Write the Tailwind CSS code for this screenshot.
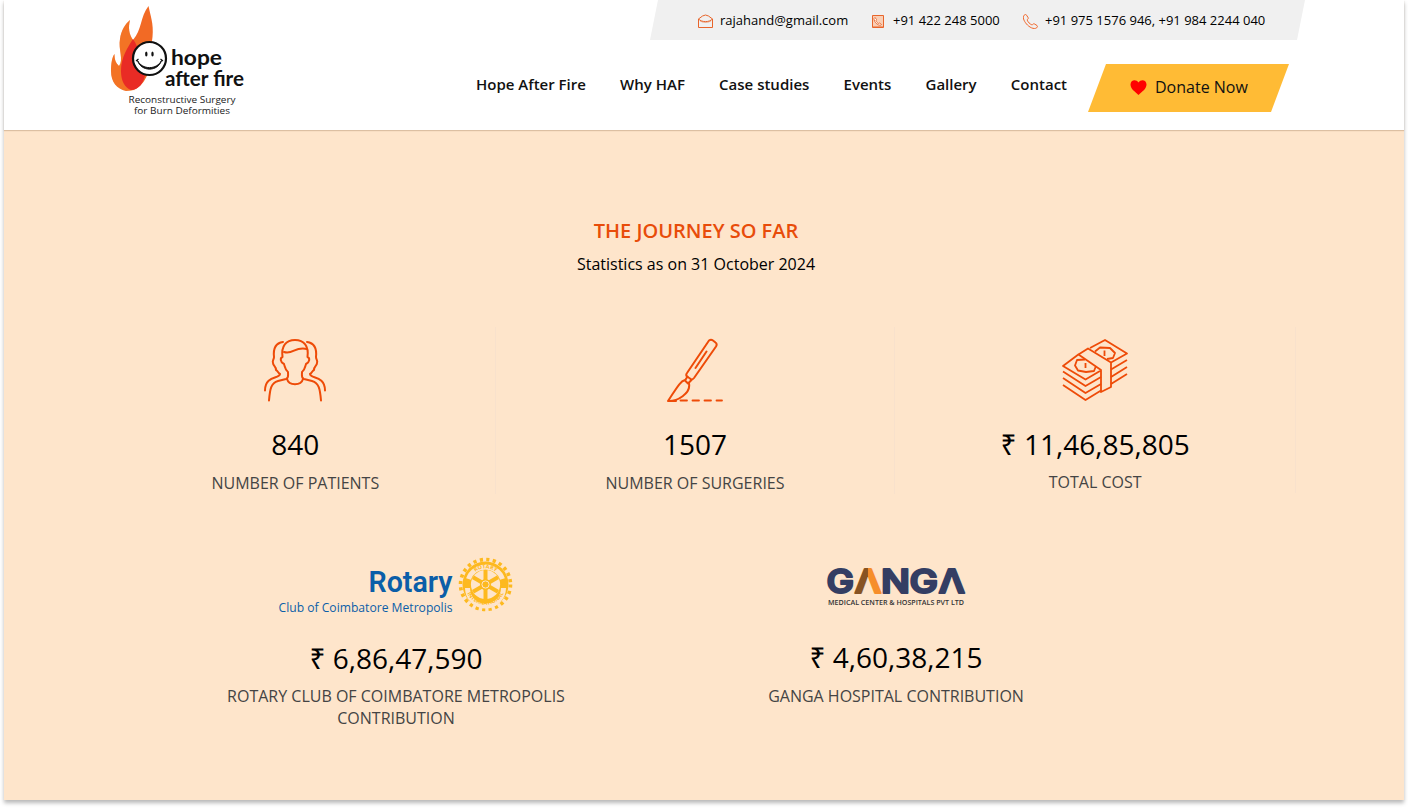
<!DOCTYPE html>
<html lang="en">
<head>
<meta charset="utf-8">
<title>Hope After Fire</title>
<script src="https://cdn.jsdelivr.net/npm/@tailwindcss/browser@4"></script>
</head>
<body class="bg-white h-[808px] overflow-hidden px-1 font-['Open_Sans','Noto_Sans',sans-serif] text-black">
<div class="w-[1400px] h-[800px] bg-[#fee5cb] shadow-[0_3px_4px_rgba(0,0,0,0.28)]">
  <header class="h-[130px] bg-white flex shadow-[0_1px_1px_rgba(120,80,40,0.25)]">
    <a class="block ml-24 w-[160px] shrink-0">
      <svg width="160" height="130" viewBox="100 0 160 130">
        <path d="M126 91C117 89 111 82 111 71C111 64 112 57 114.500 54C114.500 60 116 63 119 66C124 60 118 49 120 39C121 31 125 24 130 20C128 28 129 34 133 40C142 30 140 17 148.500 6C150 14 154 24 152.500 37C151 46 151 55 151 64C147 80 140 91 126 91Z" fill="#f26a25"/>
        <path d="M126 91C117 89 111 82 111 71C111 64 112 57 114.500 54C114.500 60 116 63 119 66C124 60 118 49 120 39C121 31 125 24 130 20C128 28 129 34 133 40C130 48 119 60 121 73C122 82 126 88 136 90Z" fill="#f58426" fill-opacity=".35"/>
        <path d="M133 39C128 47 121 57 121 71C121 81 125 88 131 90C139 90 144 82 145 75C140 63 140 48 133 39Z" fill="#e92b25"/>
        <circle cx="149.500" cy="58.500" r="16.500" fill="#fff" stroke="#111" stroke-width="2.200"/>
        <path d="M137.500 60.500C142 70 157 70 161.500 60.500C158 72 141 72 137.500 60.500Z" fill="#111" stroke="#111" stroke-width="1"/>
        <path d="M136 61l2.500-2M160.500 59l2.500 2" stroke="#111" stroke-width="1.200"/>
        <ellipse cx="146.300" cy="54" rx="1.200" ry="2.500" fill="#111"/><ellipse cx="152.500" cy="54" rx="1.200" ry="2.500" fill="#111"/>
        <g fill="#111" font-family="Lato" font-weight="700" font-size="21">
          <text x="171" y="64.500" textLength="51" lengthAdjust="spacingAndGlyphs">hope</text>
          <text x="165" y="86" textLength="79" lengthAdjust="spacingAndGlyphs">after fire</text>
        </g>
        <g fill="#222" font-family="Open Sans" font-size="9.500">
          <text x="128.500" y="103" textLength="107" lengthAdjust="spacingAndGlyphs">Reconstructive Surgery</text>
          <text x="134" y="114" textLength="96" lengthAdjust="spacingAndGlyphs">for Burn Deformities</text>
        </g>
      </svg>
    </a>
    <div class="ml-[216px] flex flex-col">
      <div class="ml-[174px] w-[655px] h-10 bg-[#f0f0f0] [clip-path:polygon(8px_0,100%_0,647px_100%,0_100%)] flex items-center pl-12 pt-0.5 text-[13px] whitespace-nowrap">
        <span class="flex items-center w-[174px]">
          <svg class="mr-[7px]" width="15" height="14" fill="none" stroke="#e8652b"><path d="M.5 5V13.500H14.500V5L10.500 2L7.500 1L4.500 2L.5 5C4 8.500 11 8.500 14.500 5"/><path d="M2 7C5 8.800 10 8.800 13 7" stroke-opacity=".5"/></svg>
          <span>rajahand@gmail.com</span>
        </span>
        <span class="flex items-center w-[151px]">
          <svg class="mr-2" width="12" height="13" fill="none" stroke="#e8652b"><path d="M.5.500H11.500V12.500H.5Z" fill="#f9cfb6"/><path d="M1 11.500H11" stroke-opacity=".5"/><path d="M3 2.500L4.500 4.500L4 5.500C4.500 7 5.500 8 6.500 8.500L7.500 8L9.500 9.500L8.500 10.200C5.500 10.500 2 7 2 3.500Z" fill="#fff" stroke-width=".9"/></svg>
          <span class="ml-px">+91 422 248 5000</span>
        </span>
        <span class="flex items-center">
          <svg class="mr-[7px]" width="15" height="15" fill="none" stroke="#f0662a" stroke-linejoin="round"><path d="M1.200 1.200C2 .300 3 .300 3.600 1.200L5.200 3.800C5.700 4.800 4 5.200 4.300 6.200C5 8.200 6.800 10 8.800 10.800C9.800 11 10.200 9.400 11.200 9.800L14 11.500C14.700 12.200 14.500 13 13.800 13.700C11 16 6 13 3.500 10C.5 6.500-.5 3 1.200 1.200Z"/></svg>
          <span>+91 975 1576 946, +91 984 2244 040</span>
        </span>
      </div>
      <div class="flex mt-6">
        <nav class="flex pt-2 w-[612px] gap-[34.200px] text-[15px] leading-6 font-semibold text-[#111] whitespace-nowrap">
          <a>Hope After Fire</a><a>Why HAF</a><a>Case studies</a><a>Events</a><a>Gallery</a><a>Contact</a>
        </nav>
        <a class="w-[201px] h-12 bg-[#ffbb35] [clip-path:polygon(18px_0,100%_0,183px_100%,0_100%)] flex items-center pl-[42px] pb-0.5 text-base text-[#111]">
          <svg class="mr-2" width="17" height="15" viewBox="0 0 17 15" fill="#f00"><path d="M8.500 15C5 11.500.5 9 .5 4.500C.5 0 6-1.200 8.500 2.500C11-1.200 16.500 0 16.500 4.500C16.500 9 12 11.500 8.500 15Z"/></svg>
          <span>Donate Now</span>
        </a>
      </div>
    </div>
  </header>

  <main class="w-[1200px] ml-[92px] pt-[88px] text-center">
    <h2 class="text-[20px] leading-[26px] font-semibold text-[#e84c0a]">THE JOURNEY SO FAR</h2>
    <p class="mt-2 text-base leading-6">Statistics as on 31 October 2024</p>

    <div class="mt-[51px] h-[166px] grid grid-cols-3 divide-x divide-[#f8e1cc] border-r border-[#f8e1cc]">
      <section class="flex flex-col items-center pt-[11px]">
        <svg width="64" height="64" viewBox="263 337 64 64" fill="none" stroke="#ee4b08" stroke-width="2" stroke-linecap="round" stroke-linejoin="round">
          <path d="M269 399.500C270 388 271 382 278 380L286 378C289 377 288 375 288 371C285 369 285 366 284 363C280 361 280 357 282.500 356C281 345 286 339 295 339C304 339 309 345 307.500 356C310 357 310 361 306 363C305 366 305 369 302 371C302 375 301 377 304 378L312 380C319 382 320 388 321 399.500"/>
          <path d="M284 351C293 354 295 345 307 348M287 378C289 385 301 385 303 378"/>
          <path d="M283 341C276 342 273 347 274 356C274 359 272 359 273 362C273 365 276 365 276 369C278 370 278 372 280 373C280 378 265 374 265 389.500"/>
          <path d="M307 341C314 342 317 347 316 356C316 359 318 359 317 362C317 365 314 365 314 369C312 370 312 372 310 373C310 378 325 374 325 389.500"/>
        </svg>
        <b class="mt-[24px] text-[28px] leading-9 font-normal">840</b>
        <span class="mt-2.5 text-base leading-[22px] text-[#444]">NUMBER OF PATIENTS</span>
      </section>
      <section class="flex flex-col items-center pt-[11px]">
        <svg width="64" height="64" viewBox="663 337.500 64 64" fill="none" stroke="#ee4b08" stroke-width="2" stroke-linecap="round" stroke-linejoin="round">
          <path d="M709 340Q711 338.500 713 340L715.500 342Q717.500 343.500 716 346L694 377.500Q692 380 690 378L687 376Q685.500 374.500 687 372.500ZM706.500 351L695.500 367.500"/>
          <path d="M687.500 376L685 380L688 383L691.500 379.500M685 379.500C680 381 677 387 668 400.500C677 401 691 393 689 383M668 400.500H676"/>
          <path d="M680.500 400H687M692.500 400H699M704.500 400H711M716.500 400H722" stroke-width="1.800"/>
        </svg>
        <b class="mt-[24px] text-[28px] leading-9 font-normal">1507</b>
        <span class="mt-2.5 text-base leading-[22px] text-[#444]">NUMBER OF SURGERIES</span>
      </section>
      <section class="flex flex-col items-center pt-[11px]">
        <svg width="68" height="64" viewBox="1061 338 68 64" fill="none" stroke="#ee4b08" stroke-width="1.800" stroke-linejoin="round">
          <path d="M1079 354L1063 366L1085.500 379.500L1100 371M1090 348L1105 340L1127 353.500L1111 362.500M1078.500 354.500L1088 348.500L1111 362.500V387L1101 392V370Z"/>
          <path d="M1063 371.500L1085.500 386L1101 377M1063 378L1085.500 393L1101 384M1063 385L1085.500 400L1101 390.500M1111 369.500L1127 360M1111 377L1127 367M1111 384L1127 374"/>
          <path d="M1085 359.500L1077 360L1075 365.500L1078 370.500L1086 372L1094 371L1096 366M1095 351.500L1100 347.500L1110 348L1115 353L1113 358L1107 359M1085.500 363V368M1104.500 350.500V356"/>
        </svg>
        <b class="mt-[24px] text-[28px] leading-9 font-normal">₹ 11,46,85,805</b>
        <span class="mt-[9px] text-base leading-[22px] text-[#444]">TOTAL COST</span>
      </section>
    </div>

    <div class="mt-[60px] ml-[50px] w-[1000px] grid grid-cols-2">
      <section class="flex flex-col items-center">
        <svg width="236" height="62" viewBox="278 553 236 62">
          <g fill="#0b5ea8">
            <text x="368.500" y="592" font-family="Roboto" font-weight="600" font-size="29.500" textLength="84" lengthAdjust="spacingAndGlyphs">Rotary</text>
            <text x="278.500" y="612" font-family="Open Sans" font-size="12" textLength="174" lengthAdjust="spacingAndGlyphs">Club of Coimbatore Metropolis</text>
          </g>
          <circle cx="485.500" cy="584.500" r="25" fill="none" stroke="#fdb91f" stroke-width="3.600" stroke-dasharray="3.200 3.345"/>
          <circle cx="485.500" cy="584.500" r="23" fill="#fdb91f"/>
          <path id="arcTop" d="M468.500 579A18 18 0 0 1 502.500 579" fill="none" stroke="#fee5cb" stroke-width="5"/>
          <path d="M467.500 588A18 18 0 0 0 503.500 588" fill="none" stroke="#fee5cb" stroke-width="5"/>
          <circle cx="485.500" cy="584.500" r="14.600" fill="#fee5cb"/>
          <g stroke="#fdb91f" stroke-width="4"><path d="M485.500 570V599M473 577.250L498 591.750M473 591.750L498 577.250"/></g>
          <circle cx="485.500" cy="584.500" r="5.500" fill="#fdb91f"/><circle cx="485.500" cy="584.500" r="3.600" fill="#fdb91f" stroke="#fee5cb" stroke-width="1"/>
          <path id="arcText" d="M469.300 584.500A16.200 16.200 0 0 1 501.700 584.500" fill="none"/>
          <path id="arcBottom" d="M465.200 584.500A20.300 20.300 0 0 0 505.800 584.500" fill="none"/>
          <g fill="#fdb91f" font-family="Open Sans" font-weight="700" font-size="5.500" text-anchor="middle">
            <text><textPath href="#arcText" startOffset="50%">ROTARY</textPath></text>
            <text><textPath href="#arcBottom" startOffset="50%">INTERNATIONAL</textPath></text>
          </g>
        </svg>
        <b class="mt-[25px] text-[28px] leading-9 font-normal">₹ 6,86,47,590</b>
        <span class="mt-[9px] w-[380px] text-base leading-[22px] text-[#444]">ROTARY CLUB OF COIMBATORE METROPOLIS CONTRIBUTION</span>
      </section>
      <section class="flex flex-col items-center">
        <svg width="140" height="62" viewBox="826 553 140 62">
          <defs><linearGradient id="amber"><stop offset=".48" stop-color="#875323"/><stop offset=".52" stop-color="#f68e2b"/></linearGradient></defs>
          <g font-family="Inter" font-weight="600" font-size="33" fill="#343e63" stroke="#343e63" stroke-width="2" stroke-linejoin="round">
            <text x="826.500" y="592.500" textLength="27.500" lengthAdjust="spacingAndGlyphs">G</text>
            <text x="854.500" y="592.500" textLength="27" lengthAdjust="spacingAndGlyphs" fill="url(#amber)" stroke="url(#amber)">Λ</text>
            <text x="881" y="592.500" textLength="29" lengthAdjust="spacingAndGlyphs">N</text>
            <text x="909.500" y="592.500" textLength="28.500" lengthAdjust="spacingAndGlyphs">G</text>
            <text x="938.500" y="592.500" textLength="26.500" lengthAdjust="spacingAndGlyphs">Λ</text>
          </g>
          <text x="828" y="604.500" font-family="Open Sans" font-weight="600" font-size="6.800" fill="#333" textLength="136" lengthAdjust="spacingAndGlyphs">MEDICAL CENTER &amp; HOSPITALS PVT LTD</text>
        </svg>
        <b class="mt-[24px] text-[28px] leading-9 font-normal">₹ 4,60,38,215</b>
        <span class="mt-2.5 text-base leading-[22px] text-[#444]">GANGA HOSPITAL CONTRIBUTION</span>
      </section>
    </div>
  </main>
</div>
</body>
</html>
